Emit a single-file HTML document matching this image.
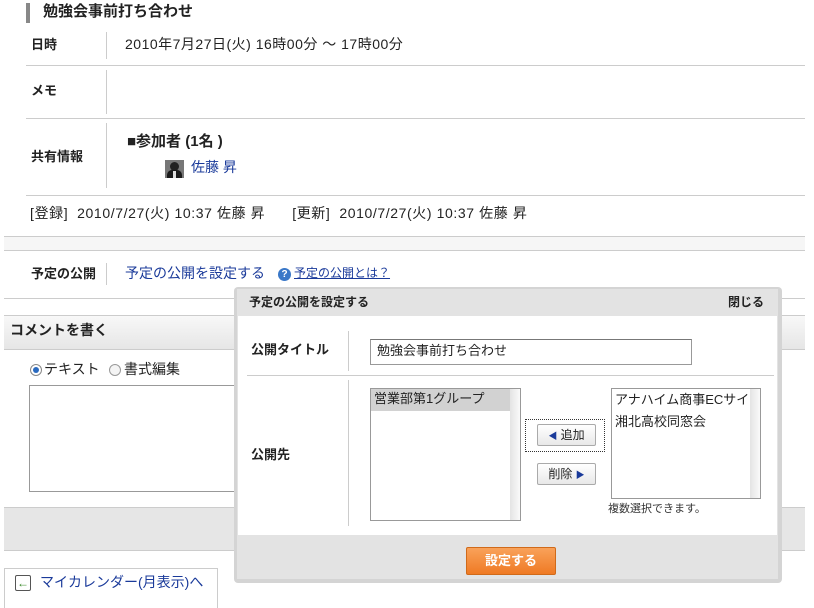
<!DOCTYPE html>
<html><head><meta charset="utf-8"><style>
*{margin:0;padding:0;box-sizing:border-box}
body{width:814px;height:603px;overflow:hidden;background:#fff;font-family:"Liberation Sans","Noto Sans CJK JP",sans-serif;font-size:13px;color:#222;position:relative}
.a{position:absolute;white-space:nowrap}
.b{font-weight:bold}
.hl{position:absolute;height:1px;background:#ccc}
.vl{position:absolute;width:1px;background:#ccc}
.blue{color:#1a3a9a}
.btn{position:absolute;border:1px solid #aaa;border-radius:2px;background:linear-gradient(#fff,#e8e8e8);font-size:12px;text-align:center;line-height:20px}
</style></head><body>
<div class="a" style="left:26px;top:3px;width:4px;height:20px;background:#888"></div>
<div class="a b" style="left:43px;top:3px;font-size:15px;line-height:18px">勉強会事前打ち合わせ</div>

<div class="a b" style="left:31px;top:37px;line-height:16px">日時</div>
<div class="vl" style="left:106px;top:32px;height:27px"></div>
<div class="a" style="left:125px;top:35px;line-height:18px;font-size:14px;letter-spacing:0.5px">2010年7月27日(火) 16時00分 ～ 17時00分</div>
<div class="hl" style="left:26px;top:65px;width:779px"></div>

<div class="a b" style="left:31px;top:83px;line-height:16px">メモ</div>
<div class="vl" style="left:106px;top:70px;height:44px"></div>
<div class="hl" style="left:26px;top:118px;width:779px"></div>

<div class="a b" style="left:31px;top:149px;line-height:16px">共有情報</div>
<div class="vl" style="left:106px;top:123px;height:65px"></div>
<div class="a b" style="left:127px;top:133px;font-size:15px;line-height:18px">■参加者 (1名 )</div>
<div class="a" style="left:165px;top:160px;width:19px;height:18px;background:#777;overflow:hidden"><div style="position:absolute;left:5px;top:2px;width:9px;height:9px;border-radius:50%;background:#222"></div><div style="position:absolute;left:2px;top:10px;width:15px;height:10px;border-radius:5px 5px 0 0;background:#1a1a1a"></div><div style="position:absolute;left:8px;top:11px;width:3px;height:7px;background:#ddd"></div></div>
<div class="a blue" style="left:191px;top:158px;line-height:18px;font-size:14px">佐藤 昇</div>
<div class="hl" style="left:26px;top:195px;width:779px"></div>

<div class="a" style="left:30px;top:204px;line-height:18px;font-size:14px;letter-spacing:0.6px">[登録]&nbsp; 2010/7/27(火) 10:37 佐藤 昇&nbsp;&nbsp;&nbsp;&nbsp;&nbsp; [更新]&nbsp; 2010/7/27(火) 10:37 佐藤 昇</div>

<div class="a" style="left:4px;top:236px;width:801px;height:15px;background:#f6f6f6;border-top:1px solid #ccc;border-bottom:1px solid #ccc"></div>

<div class="a b" style="left:31px;top:266px;line-height:16px">予定の公開</div>
<div class="vl" style="left:106px;top:263px;height:22px"></div>
<div class="a blue" style="left:125px;top:264px;line-height:18px;font-size:14px">予定の公開を設定する</div>
<div class="a" style="left:278px;top:268px;width:13px;height:13px;border-radius:50%;background:#3a78c8;color:#fff;font-size:10px;font-weight:bold;text-align:center;line-height:13px">?</div>
<div class="a blue" style="left:294px;top:266px;font-size:12px;line-height:15px;text-decoration:underline">予定の公開とは？</div>

<div class="hl" style="left:4px;top:298px;width:801px"></div>
<div class="a" style="left:4px;top:315px;width:801px;height:35px;background:linear-gradient(#f8f8f8,#e6e6e6);border-top:1px solid #ccc;border-bottom:1px solid #ccc"></div>
<div class="a b" style="left:10px;top:322px;line-height:17px;font-size:14px">コメントを書く</div>

<div class="a" style="left:30px;top:364px;width:12px;height:12px;border:1px solid #888;border-radius:50%;background:#fff"><div style="margin:2px;width:6px;height:6px;border-radius:50%;background:#2a6ac0"></div></div>
<div class="a" style="left:44px;top:360px;line-height:18px;font-size:14px">テキスト</div>
<div class="a" style="left:109px;top:364px;width:12px;height:12px;border:1px solid #999;border-radius:50%;background:#f4f4f4"></div>
<div class="a" style="left:124px;top:360px;line-height:18px;font-size:14px">書式編集</div>
<div class="a" style="left:29px;top:385px;width:220px;height:107px;border:1px solid #999;background:#fff"></div>

<div class="a" style="left:4px;top:507px;width:801px;height:44px;background:#e6e6e6;border-top:1px solid #ccc;border-bottom:1px solid #ccc"></div>

<div class="a" style="left:4px;top:568px;width:214px;height:40px;border:1px solid #ccc;border-bottom:none;background:#fff"></div>
<div class="a" style="left:15px;top:575px;width:16px;height:16px;border:1px solid #555;border-radius:2px;background:#fff;color:#3a8a2a;font-size:12px;line-height:14px;text-align:center;font-weight:bold">←</div>
<div class="a blue" style="left:40px;top:573px;line-height:18px;font-size:14px">マイカレンダー(月表示)へ</div>

<!-- popup -->
<div class="a" style="left:234px;top:287px;width:548px;height:296px;background:#d4d4d4;border-radius:4px"></div>
<div class="a" style="left:237px;top:289px;width:541px;height:290px;background:#e3e3e3"></div>
<div class="a b" style="left:249px;top:295px;font-size:12px;line-height:15px">予定の公開を設定する</div>
<div class="a b" style="left:728px;top:295px;font-size:12px;line-height:15px">閉じる</div>
<div class="a" style="left:238px;top:316px;width:539px;height:219px;background:#fff"></div>

<div class="a b" style="left:251px;top:342px;line-height:16px">公開タイトル</div>
<div class="vl" style="left:348px;top:331px;height:40px"></div>
<div class="a" style="left:370px;top:339px;width:322px;height:26px;border:1px solid #999;border-top-color:#777;font-size:13px;line-height:22px;padding-left:6px">勉強会事前打ち合わせ</div>
<div class="hl" style="left:247px;top:375px;width:527px"></div>

<div class="a b" style="left:251px;top:447px;line-height:16px">公開先</div>
<div class="vl" style="left:348px;top:380px;height:146px"></div>
<div class="a" style="left:370px;top:388px;width:151px;height:133px;border:1px solid #999;background:#fff">
<div style="position:absolute;right:0;top:0;width:10px;height:100%;background:linear-gradient(90deg,#e4e4e4,#fafafa)"></div>
<div style="position:absolute;left:0;top:0;width:139px;height:22px;background:#d2d2d2;padding-left:3px;line-height:20px">営業部第1グループ</div>
</div>
<div class="a" style="left:525px;top:419px;width:80px;height:33px;border:1px dotted #333"></div>
<div class="btn" style="left:537px;top:424px;width:59px;height:22px"><span style="color:#1a3a9a;font-size:9px">◀</span> 追加</div>
<div class="btn" style="left:537px;top:463px;width:59px;height:22px">削除 <span style="color:#1a3a9a;font-size:9px">▶</span></div>
<div class="a" style="left:611px;top:388px;width:150px;height:111px;border:1px solid #999;background:#fff;overflow:hidden">
<div style="position:absolute;right:0;top:0;width:10px;height:100%;background:linear-gradient(90deg,#e4e4e4,#fafafa)"></div>
<div style="position:absolute;left:3px;top:0;line-height:22px">アナハイム商事ECサイ<br>湘北高校同窓会</div>
</div>
<div class="a" style="left:608px;top:502px;font-size:11px;line-height:14px;color:#333">複数選択できます。</div>

<div class="a b" style="left:466px;top:547px;width:90px;height:28px;border:1px solid #d06a1a;border-radius:2px;background:linear-gradient(#f9a25a,#ef7a24);color:#fff;text-align:center;line-height:26px">設定する</div>
</body></html>
